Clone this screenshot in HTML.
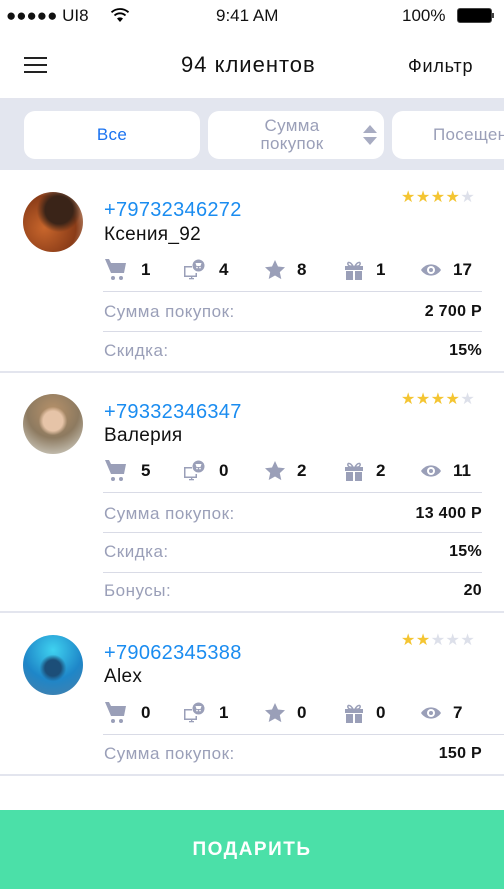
<!DOCTYPE html>
<html><head><meta charset="utf-8"><style>
*{margin:0;padding:0;box-sizing:border-box}
body{width:504px;height:889px;overflow:hidden;background:#fff;font-family:"Liberation Sans",sans-serif;position:relative;color:#111}
.a{position:absolute;white-space:nowrap}
.ph{color:#1a8cf0;font-size:20px;line-height:24px;left:104px;letter-spacing:0.3px}
.nm{font-size:19px;line-height:24px;left:104px;color:#111;letter-spacing:0.3px}
.lb{color:#9a9fb8;font-size:17px;line-height:20px;left:104px;letter-spacing:0.5px}
.vl{font-size:16px;line-height:20px;right:22px;font-weight:bold;letter-spacing:0.3px}
.hr{position:absolute;left:103px;right:22px;height:1px;background:#d9dbe6}
.fh{position:absolute;left:0;right:0;height:2px;background:#e3e5ee}
.n{font-size:17px;font-weight:bold;line-height:20px}
.ic{position:absolute;width:22px;height:22px;fill:#9a9fb8}
.av{position:absolute;left:23px;width:60px;height:60px;border-radius:50%}
.st{position:absolute;left:401px;font-size:16px;letter-spacing:0.5px;line-height:16px}
.y{color:#f4c532}.g{color:#dde0ea}
.pill{position:absolute;top:111px;height:48px;background:#fff;border-radius:11px;color:#9a9fb8;font-size:17px;text-align:center;letter-spacing:0.3px}
</style></head><body>
<svg width="0" height="0" style="position:absolute">
<symbol id="cart" viewBox="0 0 22 22"><path d="M1 0h4l2 4h15l-2 10H7z"/><circle cx="9" cy="19" r="2"/><circle cx="17" cy="19" r="2"/></symbol>
<symbol id="mon" viewBox="0 0 22 22"><path d="M1 7h8v1.5H2.5v8h10V14h1.5v4H1z" /><rect x="6" y="19" width="5" height="1.3"/><rect x="8" y="17.5" width="1.3" height="2"/><circle cx="15.5" cy="6.5" r="6"/><path d="M12.5 4h6l-1 3h-4z" fill="#fff"/><circle cx="14" cy="8.6" r=".8" fill="#fff"/><circle cx="17" cy="8.6" r=".8" fill="#fff"/></symbol>
<symbol id="star" viewBox="0 0 22 22"><path d="M11 1l3 6.5 7 .8-5.2 4.8 1.5 7L11 16.5 4.7 20l1.5-7L1 8.3l7-.8z"/></symbol>
<symbol id="gift" viewBox="0 0 22 22"><path d="M2 7h18v4H2zM3 12h7v9H3zM12 12h7v9h-7z"/><path d="M10 7C7 2 4 3 5 5.5S9 7 10 7zM12 7c3-5 6-4 5-1.5S13 7 12 7z" fill="none" stroke="#9a9fb8" stroke-width="1.5"/></symbol>
<symbol id="eye" viewBox="0 0 22 22"><path d="M1 11c5-7.5 15-7.5 20 0-5 7.5-15 7.5-20 0z"/><circle cx="11" cy="11" r="4" fill="#fff"/><circle cx="11" cy="11" r="2"/></symbol>
</svg>

<!-- status bar -->
<div class="a" style="left:6px;top:6px;font-size:17px;line-height:20px">●●●●● UI8</div>
<svg class="a" style="left:110px;top:7px" width="20" height="16" viewBox="0 0 20 16"><path d="M10 15l-3-3.5a4.5 4.5 0 016 0z" fill="#000"/><path d="M4.5 8.5a8 8 0 0111 0M1.5 5.3a12.5 12.5 0 0117 0" stroke="#000" stroke-width="1.8" fill="none"/></svg>
<div class="a" style="left:216px;top:6px;font-size:17px;line-height:20px">9:41 AM</div>
<div class="a" style="left:402px;top:6px;font-size:17px;line-height:20px">100%</div>
<div class="a" style="left:457px;top:8px;width:35px;height:15px;border:1px solid #444;border-radius:3px;background:#000"></div>
<div class="a" style="left:492px;top:13px;width:2px;height:5px;background:#444"></div>

<!-- header -->
<div class="a" style="left:24px;top:57px;width:23px;height:2px;background:#222;box-shadow:0 7px 0 #222,0 14px 0 #222"></div>
<div class="a" style="left:181px;top:52px;font-size:22px;line-height:26px;letter-spacing:1px">94 клиентов</div>
<div class="a" style="left:408px;top:55px;font-size:18px;line-height:22px;letter-spacing:0.8px">Фильтр</div>
<div class="fh" style="top:98px"></div>

<!-- filter bar -->
<div class="a" style="left:0;top:100px;width:504px;height:70px;background:#e3e6ef"></div>
<div class="pill" style="left:24px;width:176px;color:#1a72f0;line-height:48px">Все</div>
<div class="pill" style="left:208px;width:176px;line-height:18px;padding-top:6px;padding-right:8px">Сумма<br>покупок</div>
<svg class="a" style="left:362px;top:124px" width="16" height="22" viewBox="0 0 16 22"><path d="M8 1l7 8H1zM8 21l7-8H1z" fill="#a8acc2"/></svg>
<div class="pill" style="left:392px;width:140px;line-height:48px;text-align:left;padding-left:41px">Посещения</div>

<!-- card 1 -->
<div class="av" style="top:192px;background:radial-gradient(circle at 60% 30%,#3a2418 0 25%,transparent 40%),radial-gradient(circle at 35% 60%,#c8662c,#8a3c18 60%,#d9c4b0)"></div>
<div class="st" style="top:190px"><span class="y">★★★★</span><span class="g">★</span></div>
<div class="a ph" style="top:198px">+79732346272</div>
<div class="a nm" style="top:223px">Ксения_92</div>
<svg class="ic" style="left:104px;top:259px"><use href="#cart"/></svg><div class="a n" style="left:141px;top:260px">1</div>
<svg class="ic" style="left:183px;top:259px"><use href="#mon"/></svg><div class="a n" style="left:219px;top:260px">4</div>
<svg class="ic" style="left:264px;top:259px"><use href="#star"/></svg><div class="a n" style="left:297px;top:260px">8</div>
<svg class="ic" style="left:343px;top:259px"><use href="#gift"/></svg><div class="a n" style="left:376px;top:260px">1</div>
<svg class="ic" style="left:420px;top:259px"><use href="#eye"/></svg><div class="a n" style="left:453px;top:260px">17</div>
<div class="hr" style="top:291px"></div>
<div class="a lb" style="top:302px">Сумма покупок:</div><div class="a vl" style="top:302px">2 700 Р</div>
<div class="hr" style="top:331px"></div>
<div class="a lb" style="top:341px">Скидка:</div><div class="a vl" style="top:341px">15%</div>
<div class="fh" style="top:371px"></div>

<!-- card 2 -->
<div class="av" style="top:394px;background:radial-gradient(circle at 50% 45%,#e6c4a8 0 22%,transparent 32%),radial-gradient(circle at 50% 30%,#b8926a,#8d7a60 50%,#dfe0d8)"></div>
<div class="st" style="top:392px"><span class="y">★★★★</span><span class="g">★</span></div>
<div class="a ph" style="top:400px">+79332346347</div>
<div class="a nm" style="top:424px">Валерия</div>
<svg class="ic" style="left:104px;top:460px"><use href="#cart"/></svg><div class="a n" style="left:141px;top:461px">5</div>
<svg class="ic" style="left:183px;top:460px"><use href="#mon"/></svg><div class="a n" style="left:219px;top:461px">0</div>
<svg class="ic" style="left:264px;top:460px"><use href="#star"/></svg><div class="a n" style="left:297px;top:461px">2</div>
<svg class="ic" style="left:343px;top:460px"><use href="#gift"/></svg><div class="a n" style="left:376px;top:461px">2</div>
<svg class="ic" style="left:420px;top:460px"><use href="#eye"/></svg><div class="a n" style="left:453px;top:461px">11</div>
<div class="hr" style="top:492px"></div>
<div class="a lb" style="top:504px">Сумма покупок:</div><div class="a vl" style="top:504px">13 400 Р</div>
<div class="hr" style="top:532px"></div>
<div class="a lb" style="top:542px">Скидка:</div><div class="a vl" style="top:542px">15%</div>
<div class="hr" style="top:572px"></div>
<div class="a lb" style="top:581px">Бонусы:</div><div class="a vl" style="top:581px">20</div>
<div class="fh" style="top:611px"></div>

<!-- card 3 -->
<div class="av" style="top:635px;background:radial-gradient(circle at 50% 55%,#1c4e78 0 18%,transparent 30%),radial-gradient(circle at 50% 25%,#3fd2f0,#1e86c8 55%,#4a7fa8)"></div>
<div class="st" style="top:633px"><span class="y">★★</span><span class="g">★★★</span></div>
<div class="a ph" style="top:641px">+79062345388</div>
<div class="a nm" style="top:665px">Alex</div>
<svg class="ic" style="left:104px;top:702px"><use href="#cart"/></svg><div class="a n" style="left:141px;top:703px">0</div>
<svg class="ic" style="left:183px;top:702px"><use href="#mon"/></svg><div class="a n" style="left:219px;top:703px">1</div>
<svg class="ic" style="left:264px;top:702px"><use href="#star"/></svg><div class="a n" style="left:297px;top:703px">0</div>
<svg class="ic" style="left:343px;top:702px"><use href="#gift"/></svg><div class="a n" style="left:376px;top:703px">0</div>
<svg class="ic" style="left:420px;top:702px"><use href="#eye"/></svg><div class="a n" style="left:453px;top:703px">7</div>
<div class="hr" style="top:734px;right:0"></div>
<div class="a lb" style="top:744px">Сумма покупок:</div><div class="a vl" style="top:744px">150 Р</div>
<div class="fh" style="top:774px"></div>

<!-- button -->
<div class="a" style="left:0;top:810px;width:504px;height:79px;background:#4be0a8;color:#fff;font-size:19px;font-weight:bold;letter-spacing:1.5px;text-align:center;line-height:79px">ПОДАРИТЬ</div>
</body></html>
